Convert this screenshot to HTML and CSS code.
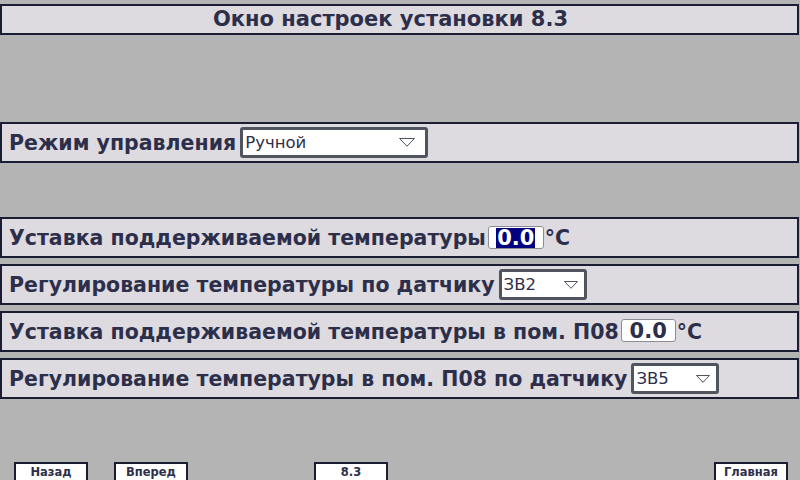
FILE: index.html
```html
<!DOCTYPE html>
<html lang="ru">
<head>
<meta charset="utf-8">
<title>Окно настроек установки 8.3</title>
<link rel="stylesheet" href="styles.css">
</head>
<body>
<div class="screen">
  <div class="title">Окно настроек установки 8.3</div>

  <div class="row row-mode">
    <span class="label">Режим управления</span>
    <div class="select sel-mode"><span class="sel-text">Ручной</span><svg class="tri" width="16" height="9" viewBox="0 0 16 9"><path d="M0.5 0.5 L15.5 0.5 L8 8.2 Z" fill="none" stroke="#50545f" stroke-width="1"/></svg></div>
  </div>

  <div class="rows">
    <div class="row">
      <span class="label">Уставка поддерживаемой температуры</span>
      <div class="field field-a"><span class="sel-val">0.0</span></div>
      <span class="unit">°C</span>
    </div>
    <div class="row">
      <span class="label">Регулирование температуры по датчику</span>
      <div class="select sel-small"><span class="sel-text">ЗВ2</span><svg class="tri" width="14" height="8" viewBox="0 0 14 8"><path d="M0.5 0.5 L13.5 0.5 L7 7.3 Z" fill="none" stroke="#50545f" stroke-width="1"/></svg></div>
    </div>
    <div class="row">
      <span class="label">Уставка поддерживаемой температуры в пом. П08</span>
      <div class="field field-b"><span class="val">0.0</span></div>
      <span class="unit">°C</span>
    </div>
    <div class="row">
      <span class="label">Регулирование температуры в пом. П08 по датчику</span>
      <div class="select sel-small"><span class="sel-text">ЗВ5</span><svg class="tri" width="14" height="8" viewBox="0 0 14 8"><path d="M0.5 0.5 L13.5 0.5 L7 7.3 Z" fill="none" stroke="#50545f" stroke-width="1"/></svg></div>
    </div>
  </div>

  <div class="nav">
    <div class="btn b1">Назад</div>
    <div class="btn b2">Вперед</div>
    <div class="btn b3">8.3</div>
    <div class="btn b4">Главная</div>
  </div>
</div>
</body>
</html>
```

FILE: styles.css
```css
* { box-sizing: border-box; }
html, body {
  margin: 0;
  padding: 0;
  width: 800px;
  height: 480px;
  overflow: hidden;
  background: #b4b4b4;
}
.screen {
  width: 800px;
  height: 480px;
  display: flex;
  flex-direction: column;
  font-family: "DejaVu Sans", Verdana, sans-serif;
  color: #2d2f4a;
}
.screen > * { flex-shrink: 0; }
.title {
  margin-top: 4px;
  width: 799px;
  height: 31px;
  border: 2px solid #1b1d33;
  background: #dddbe0;
  font-weight: bold;
  font-size: 21px;
  line-height: 27px;
  text-align: center;
  padding-right: 18px;
  white-space: nowrap;
}
.row {
  width: 799px;
  height: 41px;
  border: 2px solid #1b1d33;
  background: #dddbe0;
  display: flex;
  align-items: center;
  padding-left: 7px;
  white-space: nowrap;
}
.row-mode { margin-top: 87px; }
.rows {
  margin-top: 54px;
  display: flex;
  flex-direction: column;
  gap: 6px;
}
.label {
  font-weight: bold;
  font-size: 20.5px;
  line-height: 24px;
  padding-top: 1px;
}
.select {
  margin-left: 4px;
  height: 31px;
  border: 3px solid #50545f;
  border-radius: 3px;
  background: #ffffff;
  display: flex;
  align-items: center;
  justify-content: space-between;
  padding-left: 2px;
}
.sel-mode { width: 188px; padding-right: 10px; margin-top: -1px; }
.sel-small { width: 88px; padding-right: 6px; }
.sel-text {
  font-family: "DejaVu Sans", sans-serif;
  font-size: 16.5px;
  color: #2d2f4a;
}
.tri { display: block; }
.field {
  margin-left: 2px;
  height: 23px;
  border: 1px solid #8c8c96;
  border-radius: 3px;
  background: #ffffff;
  display: flex;
  align-items: center;
  justify-content: center;
  font-weight: bold;
  font-size: 21px;
}
.field-a { width: 56px; }
.field-b { width: 55px; margin-top: -2px; }
.sel-val {
  background: #000080;
  color: #ffffff;
  padding: 0 1px;
  line-height: 20px;
}
.val { line-height: 20px; }
.unit {
  margin-left: 1px;
  font-weight: bold;
  font-size: 20.5px;
  padding-top: 1px;
}
.nav {
  margin-top: 63px;
  padding-left: 14px;
  display: grid;
  grid-template-columns: repeat(8, 100px);
}
.btn {
  width: 74px;
  height: 22px;
  border: 2px solid #1b1d33;
  background: #ffffff;
  font-weight: bold;
  font-size: 11.5px;
  line-height: 16px;
  text-align: center;
  color: #2d2f4a;
}
.b1 { grid-column: 1; }
.b2 { grid-column: 2; }
.b3 { grid-column: 4; }
.b4 { grid-column: 8; }
```
